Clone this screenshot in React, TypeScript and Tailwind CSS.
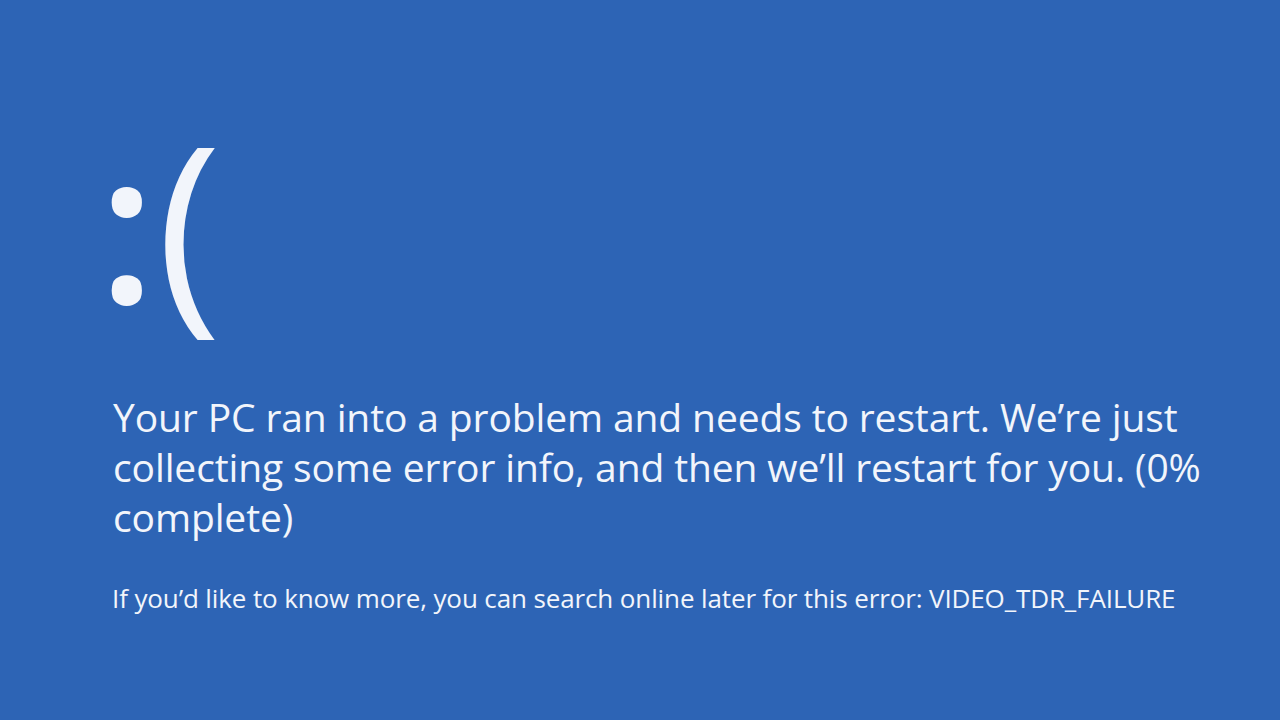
export default function App() {
  return (
    <div className="w-[1280px] h-[720px] bg-[#2d64b5] text-[#f2f5fb] overflow-hidden font-['Open_Sans',sans-serif]">
      <div className="pl-[98px] pt-[95px]">
        <div className="flex items-start h-[285px]">
          <span className="text-[210px] font-semibold leading-[250px] mt-[2px]">:</span>
          <span className="text-[220px] font-normal leading-[250px] ml-[1px]">(</span>
        </div>
        <div className="mt-[12px] pl-[15px] text-[39px] leading-[50px] tracking-[-0.12px] whitespace-nowrap">
          <div>Your PC ran into a problem and needs to restart. We’re just</div>
          <div>collecting some error info, and then we’ll restart for you. (0%</div>
          <div>complete)</div>
        </div>
        <div className="mt-[39px] pl-[14px] text-[26px] leading-[34px] tracking-[-0.12px] whitespace-nowrap">
          If you’d like to know more, you can search online later for this error: VIDEO_TDR_FAILURE
        </div>
      </div>
    </div>
  );
}
